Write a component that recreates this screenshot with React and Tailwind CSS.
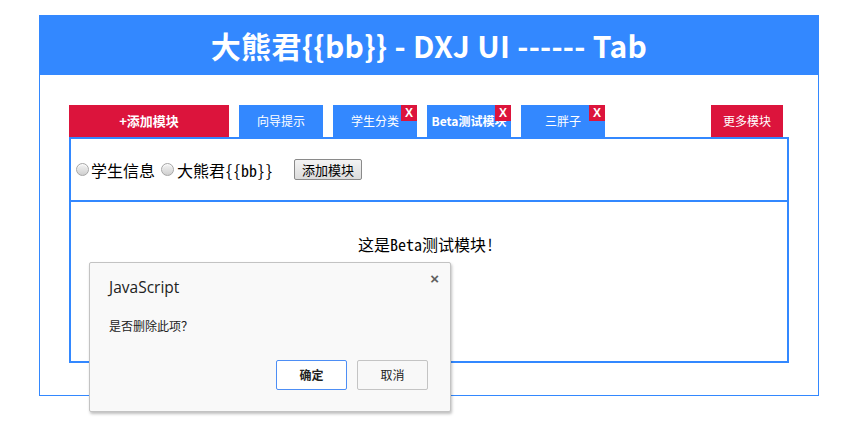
import React from "react";

function Radio() {
  return (
    <span className="inline-block w-[13px] h-[13px] rounded-full border border-[#a6a6a6] bg-gradient-to-b from-[#f4f4f4] to-[#cfcfcf] shadow-[inset_0_1px_1px_rgba(255,255,255,0.8)]" />
  );
}

function Tab({ label, close, bold }) {
  return (
    <div className="relative w-[84px] h-[32px] bg-[#3388ff] flex items-center justify-center text-white text-[12px] whitespace-nowrap overflow-visible">
      <span className={bold ? "font-bold" : ""}>{label}</span>
      {close && (
        <span className="absolute top-0 right-0 w-[16px] h-[16px] bg-[#dc143c] text-white text-[12px] font-bold leading-[16px] text-center font-['Liberation_Sans',sans-serif]">
          X
        </span>
      )}
    </div>
  );
}

export default function App() {
  return (
    <div className="relative w-[845px] h-[426px] bg-white font-['Noto_Sans_CJK_SC',sans-serif]">
      <div className="absolute left-[39px] top-[15px] w-[780px] h-[381px] border border-[#3388ff] flex flex-col">
        <div className="h-[60px] -mt-px bg-[#3388ff] flex items-center justify-center text-white text-[30px] font-bold tracking-[0.3px]">
          大熊君{"{{bb}}"} - DXJ UI ------ Tab
        </div>
        <div className="px-[29px] pt-[30px]">
          <div className="flex items-end h-[32px]">
            <div className="w-[160px] h-[32px] bg-[#dc143c] text-white text-[13px] font-bold flex items-center justify-center">
              +添加模块
            </div>
            <div className="flex gap-[10px] ml-[10px]">
              <Tab label="向导提示" />
              <Tab label="学生分类" close />
              <Tab label="Beta测试模块" close bold />
              <Tab label="三胖子" close />
            </div>
            <div className="ml-auto mr-[6px] w-[72px] h-[32px] bg-[#dc143c] text-white text-[12px] flex items-center justify-center">
              更多模块
            </div>
          </div>
          <div className="w-[720px] h-[226px] border-2 border-[#3388ff] flex flex-col">
            <div className="h-[61px] flex items-center pl-[5px] text-[16px] text-black font-['Noto_Sans_Mono_CJK_SC','Noto_Sans_CJK_SC',monospace]">
              <Radio />
              <span className="ml-[2px]">学生信息</span>
              <span className="ml-[6px] flex items-center"><Radio /></span>
              <span className="ml-[3px]">大熊君{"{{bb}}"}</span>
              <button className="ml-[21px] w-[68px] h-[21px] border border-[#8a8a8a] rounded-[2px] bg-gradient-to-b from-[#f3f3f3] to-[#dcdcdc] text-[13px] leading-none flex items-center justify-center text-black">
                添加模块
              </button>
            </div>
            <div className="h-[2px] bg-[#3388ff]" />
            <div className="flex-1 pt-[30px] pr-[6px] text-center text-[16px] text-black font-['Noto_Sans_Mono_CJK_SC','Noto_Sans_CJK_SC',monospace]">
              这是Beta测试模块!
            </div>
          </div>
        </div>
      </div>

      <div className="absolute left-[89px] top-[262px] w-[362px] h-[150px] bg-[#f9f9f9] border border-[#c3c3c3] rounded-[2px] shadow-[1px_2px_3px_rgba(0,0,0,0.25)]">
        <div className="absolute right-[11px] top-[8px] text-[#606060] text-[15px] font-bold leading-none font-['Liberation_Sans',sans-serif]">×</div>
        <div className="pl-[19px] pt-[13px] text-[15.5px] text-[#222] font-['Open_Sans',sans-serif]">JavaScript</div>
        <div className="pl-[19px] mt-[18px] text-[12px] text-[#222]">是否删除此项？</div>
        <div className="absolute right-[22px] top-[97px] flex gap-[10px]">
          <button className="w-[71px] h-[30px] border border-[#4d8ef5] rounded-[2px] bg-white text-[12px] font-bold text-[#222] flex items-center justify-center">确定</button>
          <button className="w-[71px] h-[30px] border border-[#c4c4c4] rounded-[2px] bg-[#f8f8f8] text-[12px] text-[#222] flex items-center justify-center">取消</button>
        </div>
      </div>
    </div>
  );
}
